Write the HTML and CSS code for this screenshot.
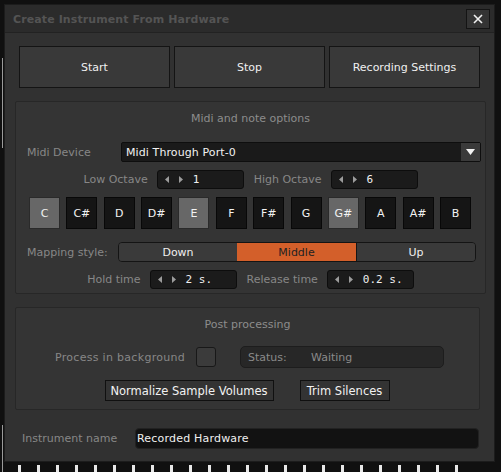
FILE: index.html
```html
<!DOCTYPE html>
<html>
<head>
<meta charset="utf-8">
<link rel="stylesheet" href="styles.css">
</head>
<body>
<div class="stage">
  <div class="edge-line edge-top"></div>
  <div class="edge-line edge-bottom"></div>
  <div class="window">
    <div class="titlebar">
      <span class="title">Create Instrument From Hardware</span>
      <div class="close">
        <svg width="10" height="10" viewBox="0 0 10 10"><path d="M1 1 L9 9 M9 1 L1 9" stroke="#f0f0f0" stroke-width="1.6"/></svg>
      </div>
    </div>
    <div class="content">
      <div class="btn-row">
        <div class="big-btn">Start</div>
        <div class="big-btn">Stop</div>
        <div class="big-btn">Recording Settings</div>
      </div>

      <div class="group midi">
        <div class="group-title">Midi and note options</div>
        <div class="device-row">
          <span class="label">Midi Device</span>
          <div class="combo">
            <span class="combo-text">Midi Through Port-0</span>
            <div class="combo-arrow"><svg width="9" height="6" viewBox="0 0 9 6"><path d="M0 0 H9 L4.5 6 Z" fill="#f2f2f2"/></svg></div>
          </div>
        </div>
        <div class="spin-row octave-row">
          <span class="label">Low Octave</span>
          <div class="spin"><svg class="arrows" width="18" height="7" viewBox="0 0 18 7"><path d="M4 0 V7 L0 3.5 Z M14 0 V7 L18 3.5 Z" fill="#9c9c9c"/></svg><span class="val">1</span></div>
          <span class="label gap-left">High Octave</span>
          <div class="spin"><svg class="arrows" width="18" height="7" viewBox="0 0 18 7"><path d="M4 0 V7 L0 3.5 Z M14 0 V7 L18 3.5 Z" fill="#9c9c9c"/></svg><span class="val">6</span></div>
        </div>
        <div class="keys">
          <div class="key on">C</div>
          <div class="key">C#</div>
          <div class="key">D</div>
          <div class="key">D#</div>
          <div class="key on">E</div>
          <div class="key">F</div>
          <div class="key">F#</div>
          <div class="key">G</div>
          <div class="key on">G#</div>
          <div class="key">A</div>
          <div class="key">A#</div>
          <div class="key">B</div>
        </div>
        <div class="mapping-row">
          <span class="label">Mapping style:</span>
          <div class="segmented">
            <div class="seg seg-down">Down</div>
            <div class="seg seg-mid">Middle</div>
            <div class="seg seg-up">Up</div>
          </div>
        </div>
        <div class="spin-row time-row">
          <span class="label">Hold time</span>
          <div class="spin"><svg class="arrows" width="18" height="7" viewBox="0 0 18 7"><path d="M4 0 V7 L0 3.5 Z M14 0 V7 L18 3.5 Z" fill="#9c9c9c"/></svg><span class="val">2 s.</span></div>
          <span class="label gap-left">Release time</span>
          <div class="spin"><svg class="arrows" width="18" height="7" viewBox="0 0 18 7"><path d="M4 0 V7 L0 3.5 Z M14 0 V7 L18 3.5 Z" fill="#9c9c9c"/></svg><span class="val">0.2 s.</span></div>
        </div>
      </div>

      <div class="group post">
        <div class="group-title">Post processing</div>
        <div class="bg-row">
          <span class="label bg-label">Process in background</span>
          <div class="check"></div>
          <div class="status"><span class="status-key">Status:</span><span class="status-val">Waiting</span></div>
        </div>
        <div class="post-btns">
          <div class="small-btn normalize">Normalize Sample Volumes</div>
          <div class="small-btn trim">Trim Silences</div>
        </div>
      </div>

      <div class="name-row">
        <span class="label">Instrument name</span>
        <div class="name-input">Recorded Hardware</div>
      </div>
    </div>
  </div>
  <div class="wave"></div>
</div>
</body>
</html>
```

FILE: styles.css
```css
* { box-sizing: border-box; }
html, body {
  margin: 0;
  padding: 0;
  background: #101010;
  font-family: "DejaVu Sans", "Liberation Sans", sans-serif;
  font-size: 11px;
}
.stage {
  position: relative;
  width: 501px;
  height: 472px;
  overflow: hidden;
  padding: 4px 0 0 4px;
}
.edge-line {
  position: absolute;
  left: 2px;
  width: 1px;
  background: #9a9a9a;
}
.edge-top { top: 58px; height: 90px; }
.edge-bottom { top: 425px; height: 47px; }
.window {
  position: relative;
  width: 491px;
  height: 458px;
  background: #313131;
  border: 1px solid #1c1c1c;
}
.titlebar {
  height: 28px;
  background: #2b2b2b;
  border-bottom: 1px solid #222;
  display: flex;
  align-items: center;
  padding: 1px 4px 0 8px;
}
.title {
  font-weight: bold;
  color: #545454;
  font-size: 11px;
  letter-spacing: 0.1px;
}
.close {
  margin-left: auto;
  width: 24px;
  height: 20px;
  background: #343434;
  border: 1px solid #141414;
  display: flex;
  align-items: center;
  justify-content: center;
}
.content {
  padding: 13px 0 0 10px;
}
.btn-row {
  display: flex;
  gap: 4px;
  width: 461px;
  height: 42px;
  margin-left: 4px;
}
.big-btn {
  flex: 1;
  background: #393939;
  border: 1px solid #141414;
  color: #f0f0f0;
  display: flex;
  align-items: center;
  justify-content: center;
}
.group {
  background: #343434;
  border: 1px solid #272727;
  border-radius: 2px;
}
.midi {
  margin-top: 13px;
  width: 471px;
  height: 193px;
}
.group-title {
  color: #8c8c8c;
  text-align: center;
  margin-top: 9px;
  height: 16px;
  line-height: 16px;
}
.label {
  color: #878787;
  white-space: nowrap;
}
.device-row {
  display: flex;
  align-items: center;
  margin-top: 15px;
  padding-left: 11px;
}
.device-row .label { width: 94px; }
.combo {
  width: 360px;
  height: 20px;
  background: #1a1a1a;
  border: 1px solid #0e0e0e;
  border-radius: 2px;
  display: flex;
  align-items: center;
}
.combo-text {
  color: #f2f2f2;
  padding-left: 4px;
  letter-spacing: 0.1px;
  flex: 1;
}
.combo-arrow {
  width: 19px;
  height: 18px;
  background: #3a3a3a;
  display: flex;
  align-items: center;
  justify-content: center;
}
.spin-row {
  display: flex;
  justify-content: center;
  align-items: center;
}
.octave-row { margin-top: 8px; }
.spin {
  width: 87px;
  height: 19px;
  background: #1b1b1b;
  border: 1px solid #0d0d0d;
  border-radius: 3px;
  margin-left: 9px;
  display: flex;
  align-items: center;
  color: #f0f0f0;
}
.arrows {
  margin-left: 7px;
  flex: none;
}
.val {
  margin-left: 10px;
  font-family: "DejaVu Sans Mono", monospace;
  font-size: 11px;
}
.gap-left { margin-left: 10px; }
.keys {
  display: flex;
  justify-content: space-between;
  width: 442px;
  margin: 8px 0 0 13px;
}
.key {
  width: 31px;
  height: 32px;
  background: #151515;
  border: 1px solid #080808;
  color: #f2f2f2;
  display: flex;
  align-items: center;
  justify-content: center;
}
.key.on {
  background: #676767;
  border-color: #2a2a2a;
}
.mapping-row {
  display: flex;
  align-items: center;
  margin-top: 13px;
  padding-left: 11px;
}
.mapping-row .label { width: 91px; }
.segmented {
  display: flex;
  width: 358px;
  height: 20px;
  border: 1px solid #141414;
  border-radius: 4px;
  overflow: hidden;
}
.seg {
  display: flex;
  align-items: center;
  justify-content: center;
  background: #3a3a3a;
  color: #f0f0f0;
}
.seg-down { width: 118px; }
.seg-mid { width: 119px; background: #d35f2a; color: #222; }
.seg-up { flex: 1; border-left: 1px solid #151515; }
.time-row { margin-top: 8px; }
.post {
  margin-top: 13px;
  width: 465px;
  height: 103px;
}
.bg-row {
  display: flex;
  align-items: center;
  margin-top: 13px;
  padding-left: 39px;
}
.bg-label { width: 130px; letter-spacing: 0.3px; }
.check {
  flex: none;
  width: 20px;
  height: 20px;
  background: #3b3b3b;
  border: 1px solid #181818;
  border-radius: 3px;
  margin-left: 11px;
}
.status {
  flex: none;
  margin-left: 24px;
  width: 204px;
  height: 22px;
  background: #272727;
  border: 1px solid #1d1d1d;
  border-radius: 5px;
  display: flex;
  align-items: center;
  color: #8a8a8a;
}
.status-key { padding-left: 7px; width: 70px; }
.post-btns {
  display: flex;
  justify-content: center;
  gap: 26px;
  margin-top: 12px;
  padding-right: 1px;
}
.small-btn {
  height: 21px;
  background: #333;
  border: 1px solid #101010;
  color: #f2f2f2;
  display: flex;
  align-items: center;
  justify-content: center;
  font-size: 11.5px;
}
.normalize { width: 169px; }
.trim { width: 90px; }
.name-row {
  display: flex;
  align-items: center;
  margin-top: 18px;
  padding-left: 7px;
}
.name-row .label { width: 113px; }
.name-input {
  width: 344px;
  height: 21px;
  background: #121212;
  border: 1px solid #222;
  border-radius: 4px;
  color: #f0f0f0;
  letter-spacing: 0.2px;
  padding-left: 1px;
  display: flex;
  align-items: center;
}
.wave {
  position: absolute;
  left: 4px;
  top: 465px;
  width: 460px;
  height: 7px;
  background: repeating-linear-gradient(90deg, transparent 0 14px, #e8e8e8 14px 17px, transparent 17px 19px);
}
```
